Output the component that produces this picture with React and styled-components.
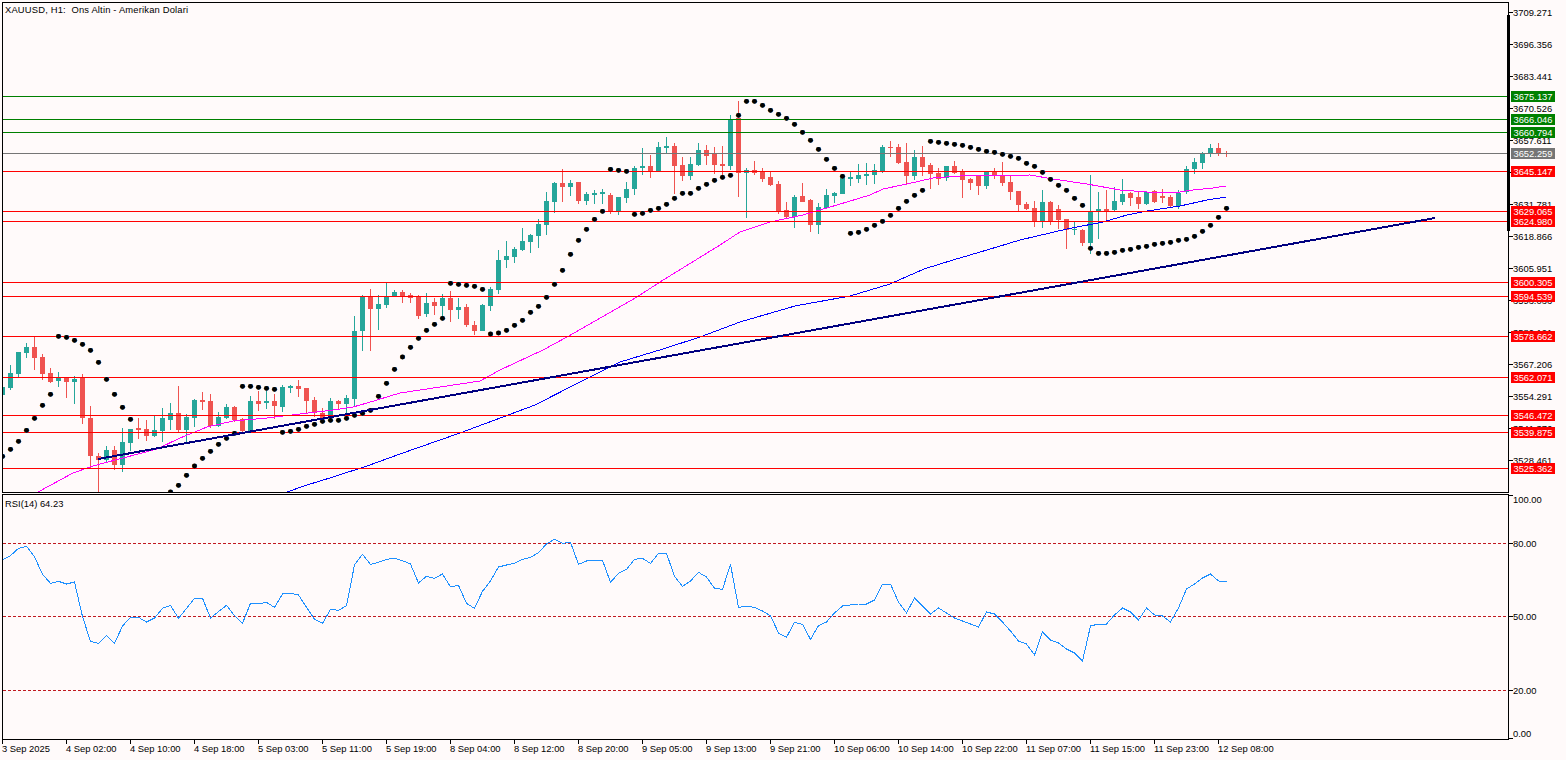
import React from "react";
import styled, { createGlobalStyle } from "styled-components";

const UP = "#26a69a";
const DOWN = "#ef5350";
const FONT = `"Liberation Sans", Arial, sans-serif`;

const GlobalStyle = createGlobalStyle`
  html, body { margin: 0; padding: 0; background: #fffafa; overflow: hidden; }
`;

const Terminal = styled.div`
  width: 1566px;
  height: 760px;
  background: #fffafa;
  color: #000;
  font: 9.4px/11px ${FONT};
  padding-top: 2px;
  box-sizing: border-box;
  display: flex;
  flex-direction: column;
  overflow: hidden;
`;

const PaneRow = styled.div`
  display: flex;
  padding-left: 2px;
  height: ${(p) => p.$height}px;
  margin-top: ${(p) => p.$gap || 0}px;
`;

const Pane = styled.div`
  position: relative;
  width: 1507px;
  height: 100%;
  box-sizing: border-box;
  border: 1px solid #000;
  background: #fffafa;
`;

const Plot = styled.svg`
  display: block;
  width: 1505px;
  height: 100%;
`;

const PaneTitle = styled.div`
  position: absolute;
  left: 2px;
  top: ${(p) => p.$top}px;
  white-space: pre;
  letter-spacing: ${(p) => p.$spacing || 0}px;
`;

const Axis = styled.div`
  position: relative;
  width: 57px;
  height: 100%;
  z-index: 1;
`;

const AxisTick = styled.i`
  position: absolute;
  left: 0;
  width: 4px;
  height: 1px;
  background: #000;
`;

const AxisValue = styled.span`
  position: absolute;
  left: 4px;
  height: 11px;
  white-space: nowrap;
`;

const PriceTag = styled.span`
  position: absolute;
  left: 2px;
  width: 44px;
  height: 11px;
  line-height: 11px;
  color: #fff;
  text-align: center;
  background: ${(p) => p.$color};
`;

const ScaleBar = styled.i`
  position: absolute;
  left: -2px;
  top: 13px;
  width: 3px;
  height: 216px;
  background: #000;
`;

const TimeAxis = styled.div`
  display: flex;
  padding-left: 2px;
`;

const TimeCell = styled.div`
  width: 64px;
  flex: none;
`;

const TimeTick = styled.i`
  display: block;
  width: 1px;
  height: 4px;
  background: #000;
`;

const TimeLabel = styled.span`
  display: block;
  white-space: nowrap;
  line-height: 10px;
`;

/* zoomed-reading helper: rows hold y values read at 3x from a base row */
const block = (base, rows) =>
  rows.map(([c, wickTop, bodyTop, bodyBottom, wickBottom]) => ({
    c,
    wickTop: Math.round(base + wickTop / 3),
    bodyTop: Math.round(base + bodyTop / 3),
    bodyBottom: Math.round(base + bodyBottom / 3),
    wickBottom: Math.round(base + wickBottom / 3),
  }));

const g = "g";
const r = "r";

const candles = [
  ...block(320, [
    [g,190,200,225,230],[g,135,160,205,210],[g,96,96,162,172],[g,68,81,99,114],[r,50,81,114,150],
    [r,102,111,162,180],[r,145,159,186,190],[g,156,174,183,201],[r,174,174,186,234],[g,168,177,186,252],
    [r,162,174,294,312],[r,258,294,408,444],[r,399,408,420,517],[g,378,390,420,426],[r,378,390,435,450],
    [g,324,366,435,456],[g,327,327,369,393],[r,294,324,330,357],[r,300,327,348,363],[g,288,330,348,351],
    [g,264,294,333,366],[g,249,279,300,330],[r,198,279,330,336],[g,282,291,330,366],[g,237,240,294,321],
    [r,216,240,246,270],[r,222,243,318,324],[g,276,291,318,321],[g,252,261,294,297],[r,258,261,300,306],
    [r,294,297,333,339],[g,228,243,336,340],[r,213,243,252,273],[g,204,243,249,267],[r,222,243,258,297],
    [g,195,201,261,276],[g,195,198,204,219],[r,180,198,207,231],[r,204,204,243,282],[r,231,240,279,291],
    [r,264,279,297,312],[g,234,243,288,303],[r,240,243,252,270],[g,225,234,252,285],
  ]),
  ...block(150, [
    [g,498,543,747,771],[g,435,441,543,603],[r,417,441,477,603],[g,435,462,477,540],[g,399,441,465,474],
    [g,420,426,438,441],[r,420,426,438,459],[r,429,435,444,459],[r,435,438,498,507],[g,429,459,492,501],
    [r,444,456,468,495],[g,432,444,468,504],[r,423,444,480,516],[g,444,471,480,507],[r,462,471,525,531],
    [r,513,525,543,555],[g,462,465,543,543],[g,411,417,468,483],[g,300,330,420,432],[g,273,318,330,354],
    [g,291,297,321,339],[g,234,273,300,303],[g,252,255,276,309],[g,207,222,258,294],[g,126,153,225,255],
    [g,96,99,156,189],[r,57,99,111,156],[g,90,99,111,138],[r,96,96,153,162],[g,126,132,153,165],
    [g,120,129,135,162],[g,117,126,132,162],[r,129,135,186,192],[g,141,141,183,195],[g,96,117,144,159],
    [g,48,54,117,135],
  ]),
  ...block(125, [
    [g,70,123,129,150],[r,90,123,138,160],[g,51,66,138,138],[g,36,63,69,87],[r,54,63,123,207],
    [r,96,120,153,168],[g,96,117,153,165],[g,54,75,120,123],[r,60,75,93,120],[r,66,84,120,147],
  ]),
  ...block(90, [
    [r,168,222,228,260],[g,75,87,228,240],[r,33,84,249,321],[g,234,240,249,384],[r,213,240,249,255],
    [r,234,243,267,276],[r,243,261,285,288],[r,273,282,366,372],[r,336,360,381,387],[g,315,321,381,414],
    [r,279,318,336,336],[r,327,330,405,426],[g,339,351,405,432],[g,297,315,354,357],[g,306,309,318,339],
    [g,252,255,312,312],[g,246,261,267,288],[g,222,255,267,279],[g,219,252,258,285],[g,222,240,255,282],
    [g,165,171,243,249],[r,153,171,174,201],[r,162,171,219,222],[r,159,216,258,282],[g,180,201,258,270],
    [r,168,201,231,258],[r,219,225,252,297],[r,234,249,267,285],[g,228,228,264,273],[r,213,228,249,252],
    [r,237,243,270,324],[r,264,267,279,300],[r,255,258,288,315],[g,243,246,288,297],[r,234,246,258,267],
    [r,216,255,279,288],[r,255,276,306,330],[r,303,303,345,363],[r,336,342,357,360],[r,333,354,396,411],
    [g,300,336,393,414],[r,333,336,393,405],[r,345,357,390,417],[r,387,387,420,477],[g,396,417,420,435],
  ]),
  ...block(120, [
    [r,327,330,369,378],[g,165,273,369,402],[g,216,267,273,357],[r,210,267,273,300],[g,201,243,270,273],
    [g,177,222,246,255],[r,216,219,234,258],[r,216,231,252,267],[g,213,216,252,255],[r,210,213,246,249],
    [r,207,228,234,249],[r,225,231,258,261],[g,210,219,258,267],[g,138,147,216,222],[g,114,126,147,162],
    [g,96,99,129,147],[g,72,84,99,111],[r,69,84,99,108],[r,93,99,100,111],
  ]),
];

const dotBlock = (base, rows) => rows.map((v) => (v == null ? null : base + v / 3));

const parabolic = [
  ...dotBlock(320, [
    409,388,364,331,295,256,223,49,52,61,73,91,127,178,223,262,298,null,null,null,null,
    516,496,466,438,415,394,373,355,340,199,199,202,205,208,337,334,328,319,313,304,301,301,295,
    286,280,271,229,190,148,111,
  ]),
  ...dotBlock(150, [
    592,565,541,523,505,400,403,406,409,418,552,549,541,526,511,487,469,442,403,361,313,271,238,208,184,
    58,61,64,193,190,181,175,163,145,130,130,115,103,91,82,76,
  ]),
  ...dotBlock(90, [
    76,34,34,46,61,73,85,103,127,151,178,208,235,259,430,427,418,406,394,376,355,334,316,301,
    154,157,160,163,166,172,178,184,187,193,199,205,220,229,247,268,286,301,325,
  ]),
  ...dotBlock(120, [256,385,400,400,397,391,388,382,379,373,370,367,361,358,349,334,316,292,265]),
];

const rsi = [
  ...dotBlock(485, [
    224,212,190,184,215,268,295,289,297,291,395,469,475,451,475,423,397,397,411,399,370,361,400,370,340,
    340,399,380,361,392,415,355,357,352,367,327,325,330,367,403,415,373,376,362,240,208,238,232,223,220,
  ]),
  ...dotBlock(530, [
    92,102,159,139,145,132,171,166,220,235,184,153,111,105,100,88,82,68,42,28,40,37,103,93,91,91,157,130,
    118,88,85,100,70,70,139,169,153,127,141,175,178,103,232,229,232,243,257,309,322,277,283,328,287,
  ]),
  622,613,606,605,604,604,600,584,584,602,613,598,606,614,608,613,618,621,624,627,612,614,622,631,641,
  644,655,632,640,643,649,653,661,626,624,624,615,608,612,620,608,615,616,622,608,589,584,578,574,581,582,
];

const magentaMa = [[38,492],[73,473],[90,467],[100,464],[123,458],[157,449],[180,438],[207,427],[233,421],[267,418],[300,414],[333,410],[353,407],[367,403],[400,393],[440,387],[480,381],[500,370],[543,350],[567,337],[637,297],[660,282],[720,245],[740,232],[770,222],[803,215],[837,205],[870,195],[883,189],[907,184],[933,178],[960,176],[1030,175],[1053,179],[1087,184],[1120,190],[1147,192],[1180,192],[1193,190],[1213,188],[1226,186]];
const blueMa = [[287,492],[307,485],[333,477],[367,466],[400,454],[460,433],[535,405],[580,382],[620,362],[663,349],[700,337],[740,322],[795,306],[850,296],[890,284],[924,269],[953,260],[987,250],[1020,240],[1067,229],[1103,222],[1127,215],[1147,211],[1180,206],[1207,200],[1226,197]];

const GREEN = "#008000";
const RED = "#ff0000";
const GRAY = "#757575";

const levels = [
  [96, "3675.137", GREEN],[119, "3666.046", GREEN],[132, "3660.794", GREEN],[153, "3652.259", GRAY],
  [171, "3645.147", RED],[211, "3629.065", RED],[221, "3624.980", RED],[282, "3600.305", RED],
  [296, "3594.539", RED],[336, "3578.662", RED],[377, "3562.071", RED],[415, "3546.472", RED],
  [432, "3539.875", RED],[468, "3525.362", RED],
];

const priceTicks = ["3709.271","3696.356","3683.441","3670.526","3657.611","3644.696","3631.781","3618.866","3605.951","3593.036","3580.121","3567.206","3554.291","3541.376","3528.461"]
  .map((label, i) => ({ label, y: 12 + 32 * i, textY: 12 + 32 * i }));

const rsiTicks = [
  { label: "100.00", y: 495, textY: 499 },
  { label: "80.00", y: 543, textY: 543 },
  { label: "50.00", y: 616, textY: 616 },
  { label: "20.00", y: 690, textY: 690 },
  { label: "0.00", y: 738, textY: 733 },
];

const times = ["3 Sep 2025","4 Sep 02:00","4 Sep 10:00","4 Sep 18:00","5 Sep 03:00","5 Sep 11:00","5 Sep 19:00","8 Sep 04:00","8 Sep 12:00","8 Sep 20:00","9 Sep 05:00","9 Sep 13:00","9 Sep 21:00","10 Sep 06:00","10 Sep 14:00","10 Sep 22:00","11 Sep 07:00","11 Sep 15:00","11 Sep 23:00","12 Sep 08:00"];

const col = (k) => 2 + 8 * k;
const pts = (list) => list.map(([x, y]) => `${x},${y}`).join(" ");

function Candle({ k, d }) {
  const x = col(k);
  const fill = d.c === "g" ? UP : DOWN;
  return (
    <g fill={fill}>
      <rect x={x} y={d.wickTop} width="1" height={Math.max(1, d.wickBottom - d.wickTop)} />
      <rect x={x - 2} y={d.bodyTop} width="5" height={Math.max(1, d.bodyBottom - d.bodyTop)} />
    </g>
  );
}

function SarDot({ k, y }) {
  const cx = col(k) + 0.5;
  return (
    <g>
      <circle cx={cx - 0.4} cy={y} r="2.3" fill="#e08000" />
      <circle cx={cx + 0.4} cy={y} r="2.3" fill="#0070e0" />
      <circle cx={cx} cy={y} r="2.4" fill="#000" />
    </g>
  );
}

function MainChart() {
  return (
    <Plot viewBox="3 3 1505 489" preserveAspectRatio="none">
      <g shapeRendering="crispEdges">
        {candles.map((d, k) => <Candle key={k} k={k} d={d} />)}
        <polyline points={pts(magentaMa)} fill="none" stroke="#ff00ff" strokeWidth="1" />
        <polyline points={pts(blueMa)} fill="none" stroke="#0000ff" strokeWidth="1" />
        {levels.map(([y, label, color]) => (
          <rect key={label} x="3" y={y} width="1505" height="1" fill={color} />
        ))}
      </g>
      {parabolic.map((y, k) => (y == null ? null : <SarDot key={k} k={k} y={y} />))}
      <line x1="98" y1="459" x2="1435" y2="218" stroke="#000080" strokeWidth="2" shapeRendering="crispEdges" />
    </Plot>
  );
}

function RsiChart() {
  return (
    <Plot viewBox="3 495 1505 244" preserveAspectRatio="none">
      <g shapeRendering="crispEdges">
        {[543, 616, 690].map((y) => (
          <line key={y} x1="3" x2="1508" y1={y + 0.5} y2={y + 0.5} stroke="#c01820" strokeDasharray="3 2" />
        ))}
      </g>
      <polyline
        points={rsi.map((y, k) => `${col(k) + 0.5},${y}`).join(" ")}
        fill="none"
        stroke="#1e90ff"
        strokeWidth="1"
        shapeRendering="crispEdges"
      />
    </Plot>
  );
}

function PriceAxis({ origin, ticks, tags = [], bar }) {
  return (
    <Axis>
      {bar && <ScaleBar />}
      {ticks.map((t) => (
        <React.Fragment key={t.label}>
          <AxisTick style={{ top: t.y - origin }} />
          <AxisValue style={{ top: t.textY - origin - 5 }}>{t.label}</AxisValue>
        </React.Fragment>
      ))}
      {tags.map(([y, label, color]) => (
        <PriceTag key={label} $color={color} style={{ top: y - origin - 5 }}>{label}</PriceTag>
      ))}
    </Axis>
  );
}

export default function App() {
  return (
    <Terminal>
      <GlobalStyle />
      <PaneRow $height={491}>
        <Pane>
          <MainChart />
          <PaneTitle $top={1} $spacing={0.18}>{"XAUUSD, H1:  Ons Altin - Amerikan Dolari"}</PaneTitle>
        </Pane>
        <PriceAxis origin={2} ticks={priceTicks} tags={levels} bar />
      </PaneRow>
      <PaneRow $height={246} $gap={1}>
        <Pane>
          <RsiChart />
          <PaneTitle $top={3}>RSI(14) 64.23</PaneTitle>
        </Pane>
        <PriceAxis origin={494} ticks={rsiTicks} />
      </PaneRow>
      <TimeAxis>
        {times.map((t) => (
          <TimeCell key={t}>
            <TimeTick />
            <TimeLabel>{t}</TimeLabel>
          </TimeCell>
        ))}
      </TimeAxis>
    </Terminal>
  );
}
